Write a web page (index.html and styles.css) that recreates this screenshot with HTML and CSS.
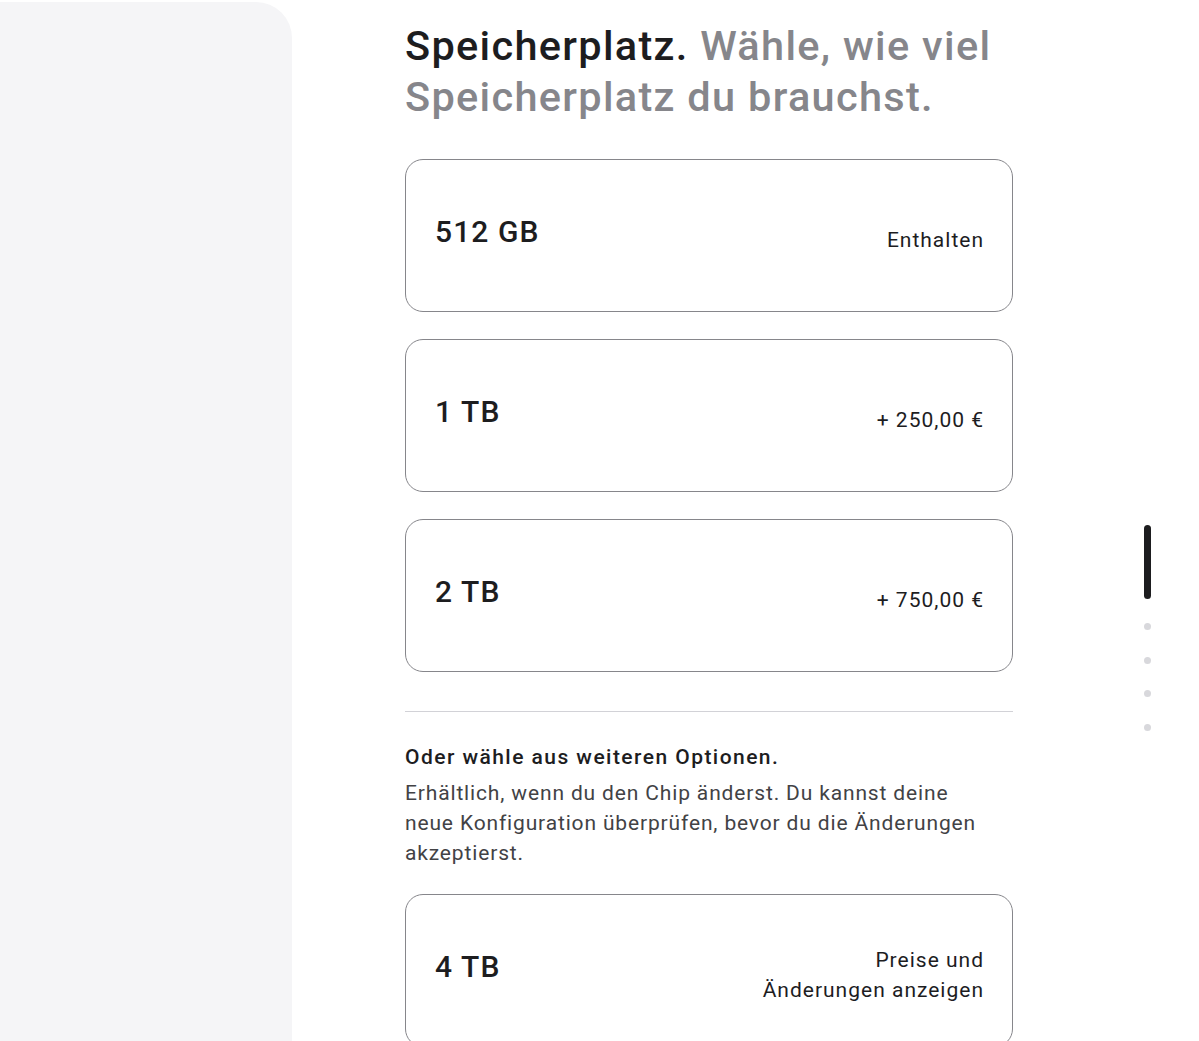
FILE: index.html
```html
<!DOCTYPE html>
<html lang="de">
<head>
<meta charset="utf-8">
<title>Speicherplatz</title>
<link rel="stylesheet" href="styles.css">
</head>
<body>
<div class="page">
  <aside class="side"></aside>
  <main class="main">
    <h2 class="heading"><span class="strong">Speicherplatz.</span> Wähle, wie viel Speicherplatz du brauchst.</h2>
    <div class="options">
      <div class="card">
        <span class="label">512 GB</span>
        <span class="price">Enthalten</span>
      </div>
      <div class="card">
        <span class="label">1 TB</span>
        <span class="price">+ 250,00 €</span>
      </div>
      <div class="card">
        <span class="label">2 TB</span>
        <span class="price">+ 750,00 €</span>
      </div>
    </div>
    <hr class="divider">
    <h3 class="more-title">Oder wähle aus weiteren Optionen.</h3>
    <p class="more-text">Erhältlich, wenn du den Chip änderst. Du kannst deine neue Konfiguration überprüfen, bevor du die Änderungen akzeptierst.</p>
    <div class="card">
      <span class="label">4 TB</span>
      <span class="price">Preise und<br>Änderungen anzeigen</span>
    </div>
  </main>
</div>
<nav class="pager">
  <span class="pager-bar"></span>
  <span class="pager-dot"></span>
  <span class="pager-dot"></span>
  <span class="pager-dot"></span>
  <span class="pager-dot"></span>
</nav>
</body>
</html>
```
FILE: styles.css
```css
html, body {
  margin: 0;
  padding: 0;
  background: #ffffff;
  overflow: hidden;
}
body {
  font-family: Roboto, "Noto Sans", "Liberation Sans", sans-serif;
  color: #1d1d1f;
  height: 1041px;
}
.page {
  display: flex;
  align-items: flex-start;
}
.side {
  width: 292px;
  flex: 0 0 292px;
  height: 1100px;
  margin-top: 2px;
  background: #f5f5f7;
  border-top-right-radius: 36px;
}
.main {
  margin-left: 113px;
  width: 608px;
  padding-top: 20px;
}
.heading {
  margin: 0 0 37px;
  font-size: 41.5px;
  line-height: 51px;
  font-weight: 500;
  letter-spacing: 1.3px;
  color: #86868b;
}
.heading .strong {
  color: #1d1d1f;
}
.options {
  display: flex;
  flex-direction: column;
  gap: 27px;
}
.card {
  box-sizing: border-box;
  min-height: 153px;
  border: 1.5px solid #86868b;
  border-radius: 18px;
  padding: 38px 28px 30px 29px;
  display: flex;
  align-items: center;
  justify-content: space-between;
}
.label {
  font-size: 30px;
  font-weight: 500;
  letter-spacing: 1.1px;
  margin-bottom: 16px;
}
.price {
  font-size: 21px;
  line-height: 30px;
  text-align: right;
  color: #1d1d1f;
  letter-spacing: 1px;
}
.divider {
  border: 0;
  border-top: 1px solid #d2d2d7;
  margin: 39px 0 32px;
}
.more-title {
  margin: 0 0 8px;
  font-size: 21px;
  line-height: 26px;
  font-weight: 500;
  letter-spacing: 1.45px;
}
.more-text {
  margin: 0 0 26px;
  max-width: 596px;
  font-size: 21px;
  line-height: 30px;
  color: #424245;
  letter-spacing: 0.85px;
}
.pager {
  position: fixed;
  left: 1143px;
  top: 525px;
  width: 8px;
  display: flex;
  flex-direction: column;
  align-items: center;
}
.pager-bar {
  width: 7px;
  height: 74px;
  border-radius: 4px;
  background: #1d1d1f;
  margin-bottom: 24px;
}
.pager-dot {
  width: 7px;
  height: 7px;
  border-radius: 50%;
  background: #d8d8dc;
  margin-bottom: 26.5px;
}
```
